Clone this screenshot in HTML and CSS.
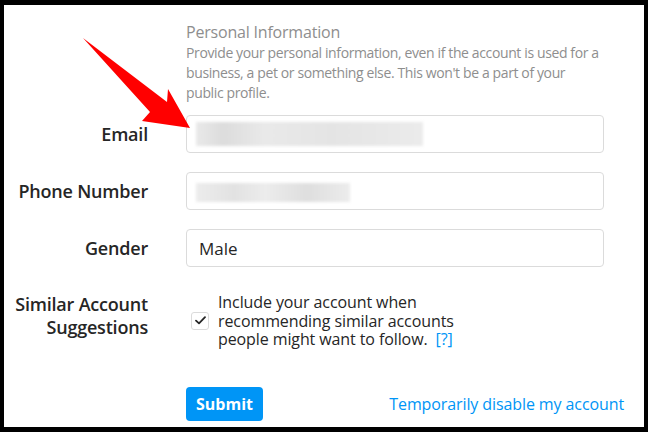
FILE: index.html
```html
<!DOCTYPE html>
<html lang="en">
<head>
<meta charset="utf-8">
<title>Edit Profile</title>
<link rel="stylesheet" href="styles.css">
</head>
<body>
<div class="frame">
  <form class="form">
    <div class="row intro">
      <div></div>
      <div class="intro-text">
        <h2 class="intro-title">Personal Information</h2>
        <p class="intro-desc">Provide your personal information, even if the account is used for a<br>business, a pet or something else. This won't be a part of your<br>public profile.</p>
      </div>
    </div>
    <div class="row field">
      <label class="label">Email</label>
      <div class="input"><span class="blur blur-email"></span></div>
    </div>
    <div class="row field">
      <label class="label">Phone Number</label>
      <div class="input"><span class="blur blur-phone"></span></div>
    </div>
    <div class="row field">
      <label class="label">Gender</label>
      <div class="input"><span class="value">Male</span></div>
    </div>
    <div class="row field check-row">
      <label class="label label-multi">Similar Account<br>Suggestions</label>
      <div class="check">
        <span class="box">
          <svg width="11" height="9" viewBox="0 0 11 9"><path d="M1 4.6 L4 7.4 L10 1.2" fill="none" stroke="#262626" stroke-width="1.8" stroke-linecap="round" stroke-linejoin="round"/></svg>
        </span>
        <p class="check-text">Include your account when<br>recommending similar accounts<br>people might want to follow.<a class="help">[?]</a></p>
      </div>
    </div>
    <div class="row actions-row">
      <div></div>
      <div class="actions">
        <button type="button" class="submit">Submit</button>
        <a class="disable">Temporarily disable my account</a>
      </div>
    </div>
  </form>
  <svg class="arrow" width="120" height="100" viewBox="0 0 120 100">
    <polygon points="0,0 84,64 85,51 107,90 59,83 67,74" fill="#ff0000"/>
  </svg>
</div>
</body>
</html>
```
FILE: styles.css
```css
* { box-sizing: border-box; }
html, body { margin: 0; padding: 0; background: #000; }
body {
  font-family: "Open Sans", "Noto Sans", sans-serif;
  color: #262626;
}
.frame {
  position: relative;
  width: 648px;
  height: 432px;
  background: #fff;
  border-style: solid;
  border-color: #000;
  border-width: 5px 4px 5px 4px;
  overflow: hidden;
}
.form { padding-top: 16px; }
.row {
  display: grid;
  grid-template-columns: 144px 418px;
  column-gap: 38px;
}
.intro-title {
  margin: 0;
  font-size: 16px;
  font-weight: 400;
  letter-spacing: -0.2px;
  line-height: 22px;
  color: #8e8e8e;
}
.intro-desc {
  margin: 0;
  font-size: 14px;
  letter-spacing: -0.38px;
  line-height: 20px;
  white-space: nowrap;
  color: #8e8e8e;
}
.field { margin-top: 19px; align-items: center; }
.intro + .field { margin-top: 12px; }
.label {
  text-align: right;
  font-size: 18px;
  font-weight: 600;
  letter-spacing: -0.2px;
  line-height: 23px;
}
.input {
  height: 38px;
  border: 1px solid #dbdbdb;
  border-radius: 4px;
  display: flex;
  align-items: center;
  padding-left: 9px;
  background: #fff;
}
.blur {
  display: block;
  height: 24px;
  background: #e8e8e8;
  filter: blur(1.5px);
}
.blur-email { width: 227px; background: linear-gradient(90deg, #e9e9e9 0%, #dcdcdc 12%, #e9e9e9 30%, #e4e4e4 60%, #ebebeb 100%); }
.blur-phone { width: 154px; height: 19px; margin-top: 2px; background: linear-gradient(90deg, #ececec 0%, #e2e2e2 25%, #ececec 45%, #dedede 72%, #ececec 100%); }
.value { font-size: 17px; padding-left: 3px; }
.check-row { margin-top: 26px; align-items: start; }
.check { display: flex; align-items: center; gap: 9px; padding-left: 5px; }
.box {
  flex: none;
  width: 18px;
  height: 18px;
  border: 1px solid #dbdbdb;
  border-radius: 3px;
  display: flex;
  align-items: center;
  justify-content: center;
}
.check-text {
  margin: 0;
  font-size: 16px;
  letter-spacing: -0.1px;
  line-height: 18.5px;
}
.help { color: #0095f6; margin-left: 8px; }
.actions-row { margin-top: 38px; }
.actions { display: flex; align-items: center; justify-content: space-between; }
.submit {
  background: #0095f6;
  color: #fff;
  border: 0;
  border-radius: 4px;
  height: 34px;
  width: 77px;
  font-family: inherit;
  font-size: 16px;
  font-weight: 700;
  padding: 0;
}
.disable {
  color: #0095f6;
  font-size: 16px;
  font-weight: 500;
  letter-spacing: -0.1px;
  margin-right: -20px;
}
.arrow {
  position: absolute;
  left: 79px;
  top: 33px;
}
```
